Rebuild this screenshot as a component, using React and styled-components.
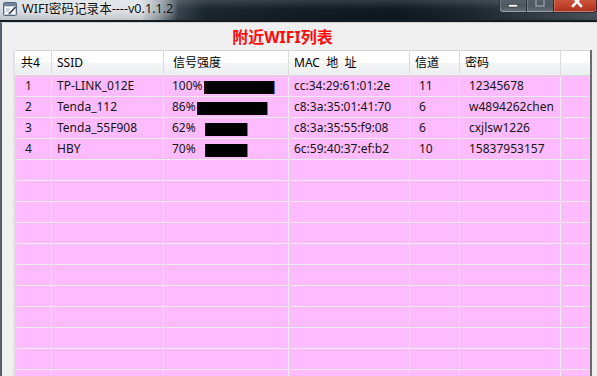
import React from "react";
import styled, { createGlobalStyle } from "styled-components";

const Global = createGlobalStyle`
  html, body { margin: 0; padding: 0; background: #f0f0f0; }
  body { font-family: "Noto Sans", "Noto Sans CJK SC", sans-serif; }
  * { box-sizing: border-box; }
`;

const Window = styled.div`
  width: 597px;
  height: 376px;
  overflow: hidden;
  display: flex;
  flex-direction: column;
  background: #f0f0f0;
`;

const TitleBar = styled.div`
  height: 22px;
  flex: none;
  display: flex;
  align-items: flex-start;
  border-bottom: 2px solid #141b21;
  background:
    linear-gradient(to bottom, rgba(255,255,255,0.14) 0, rgba(255,255,255,0) 45%, rgba(0,0,0,0.12) 100%),
    linear-gradient(to right, #d7dee4 0, #dfe4e8 140px, #a4adb4 158px, #3a4650 178px, #1c2831 205px, #131e27 300px, #101a22 400px, #1d2932 470px, #4c5660 597px);
`;

const AppIcon = styled.svg`
  margin: 2px 0 0 3px;
  flex: none;
`;

const TitleText = styled.span`
  margin: 1px 0 0 5px;
  font-size: 12.6px;
  line-height: 16px;
  color: #111;
  text-shadow: 0 0 6px rgba(255,255,255,0.9);
  white-space: nowrap;
`;

const Controls = styled.div`
  margin-left: auto;
  display: flex;
  align-items: flex-start;
`;

const CtlButton = styled.div`
  width: ${p => p.$w}px;
  height: 13px;
  display: flex;
  justify-content: center;
  align-items: flex-start;
  border: 1px solid #2a3138;
  border-top: none;
  border-left: ${p => (p.$first ? "1px solid #2a3138" : "none")};
  border-bottom-left-radius: ${p => (p.$first ? "4px" : "0")};
  border-bottom-right-radius: ${p => (p.$last ? "4px" : "0")};
  box-shadow: inset 0 -1px 0 rgba(255,255,255,0.35), inset 1px 0 0 rgba(255,255,255,0.2);
  background: ${p =>
    p.$danger
      ? "linear-gradient(to bottom, #c9543c 0, #c2412a 50%, #a8301c 100%)"
      : "linear-gradient(to bottom, #56606a 0, #4e5860 50%, #68727a 100%)"};
`;

const Client = styled.div`
  flex: 1;
  display: flex;
  flex-direction: column;
  border-left: 2px solid #56606a;
  border-top: 1px solid #cfd3d6;
  background: #f0f0f0;
  min-height: 0;
`;

const Heading = styled.div`
  height: 27px;
  flex: none;
  text-align: center;
  padding-top: 4px;
  padding-right: 34px;
  font-size: 16px;
  font-weight: bold;
  line-height: 20px;
  color: #ff0a0a;
`;

const Table = styled.div`
  margin-left: 11px;
  width: 579px;
  flex: 1;
  overflow: hidden;
  border-left: 2px solid #e2e2e2;
  border-right: 2px solid #6b6b6b;
  font-size: 12px;
`;

const HeaderRow = styled.div`
  display: flex;
  height: 26px;
  border-top: 1px solid #d6d6d6;
  border-bottom: 1px solid #d9d9d9;
  background: linear-gradient(to bottom, #ffffff 0, #ffffff 50%, #f2f4f6 52%, #eceef0 100%);
`;

const Row = styled.div`
  display: flex;
  height: 21px;
  border-bottom: 1px solid #ebebeb;
  background: #ffbbff;
`;

const HeadCell = styled.div`
  width: ${p => p.$w}px;
  flex: none;
  padding-left: ${p => p.$pad}px;
  line-height: 24px;
  color: #000;
  white-space: pre;
  border-right: ${p => (p.$last ? "none" : "1px solid #dcdcdc")};
`;

const Cell = styled.div`
  width: ${p => p.$w}px;
  flex: none;
  display: flex;
  align-items: flex-start;
  padding-left: ${p => p.$pad}px;
  line-height: 20px;
  color: #141414;
  white-space: pre;
  border-right: ${p => (p.$last ? "none" : "1px solid #ebebeb")};
`;

const Bar = styled.div`
  height: 13px;
  margin-top: 5px;
  margin-left: ${p => p.$gap}px;
  flex: none;
  background: #000;
  border-left: 1px solid #3a0a0a;
  border-right: 1px solid #4a6cf2;
`;

const columns = [
  { key: "idx", title: "共4", w: 37, hp: 6, bp: 10 },
  { key: "ssid", title: "SSID", w: 112, hp: 5, bp: 5 },
  { key: "sig", title: "信号强度", w: 125, hp: 9, bp: 8 },
  { key: "mac", title: "MAC  地  址", w: 121, hp: 5, bp: 5 },
  { key: "ch", title: "信道", w: 50, hp: 5, bp: 9 },
  { key: "pw", title: "密码", w: 101, hp: 5, bp: 9 },
  { key: "x", title: "", w: 29, hp: 0, bp: 0 },
];

const data = [
  { idx: "1", ssid: "TP-LINK_012E", sig: "100%", barW: 71, gap: 1, mac: "cc:34:29:61:01:2e", ch: "11", pw: "12345678" },
  { idx: "2", ssid: "Tenda_112", sig: "86%", barW: 71, gap: 1, mac: "c8:3a:35:01:41:70", ch: "6", pw: "w4894262chen" },
  { idx: "3", ssid: "Tenda_55F908", sig: "62%", barW: 43, gap: 9, mac: "c8:3a:35:55:f9:08", ch: "6", pw: "cxjlsw1226" },
  { idx: "4", ssid: "HBY", sig: "70%", barW: 43, gap: 9, mac: "6c:59:40:37:ef:b2", ch: "10", pw: "15837953157" },
];

const rows = [...data, ...Array.from({ length: 11 }, () => null)];

export default function App() {
  return (
    <Window>
      <Global />
      <TitleBar>
        <AppIcon width="14" height="14" viewBox="0 0 14 14">
          <rect x="0.5" y="0.5" width="13" height="13" rx="1" fill="#c3ced8" stroke="#56677a" />
          <rect x="1" y="1" width="12" height="3" fill="#6f839a" />
          <rect x="2" y="5" width="10" height="7" fill="#ffffff" />
          <line x1="3" y1="7" x2="7" y2="7" stroke="#9aa8b6" strokeWidth="1" />
          <line x1="3" y1="9" x2="6" y2="9" stroke="#9aa8b6" strokeWidth="1" />
          <line x1="6" y1="12" x2="12.5" y2="5" stroke="#34424f" strokeWidth="1.8" />
        </AppIcon>
        <TitleText>WIFI密码记录本----v0.1.1.2</TitleText>
        <Controls>
          <CtlButton $w={28} $first>
            <svg width="10" height="12" viewBox="0 0 10 12">
              <rect x="0.5" y="4.5" width="9" height="2.5" fill="#fff" stroke="#2a3138" strokeWidth="0.6" />
            </svg>
          </CtlButton>
          <CtlButton $w={27}>
            <svg width="10" height="12" viewBox="0 0 10 12">
              <rect x="1" y="-3" width="8" height="9" fill="none" stroke="#8d959c" strokeWidth="1.6" />
            </svg>
          </CtlButton>
          <CtlButton $w={43} $danger $last>
            <svg width="20" height="12" viewBox="0 0 20 12" style={{ marginLeft: 6 }}>
              <path d="M5 -3 L13 6 M13 -3 L5 6" stroke="#fff" strokeWidth="2.6" strokeLinecap="square" />
            </svg>
          </CtlButton>
        </Controls>
      </TitleBar>
      <Client>
        <Heading>附近WIFI列表</Heading>
        <Table>
          <HeaderRow>
            {columns.map((c, i) => (
              <HeadCell key={c.key} $w={c.w} $pad={c.hp} $last={i === columns.length - 1}>
                {c.title}
              </HeadCell>
            ))}
          </HeaderRow>
          {rows.map((r, ri) => (
            <Row key={ri}>
              {columns.map((c, i) => (
                <Cell key={c.key} $w={c.w} $pad={c.bp} $last={i === columns.length - 1}>
                  {r && c.key !== "x" ? r[c.key] : ""}
                  {r && c.key === "sig" ? <Bar $gap={r.gap} style={{ width: r.barW }} /> : null}
                </Cell>
              ))}
            </Row>
          ))}
        </Table>
      </Client>
    </Window>
  );
}
